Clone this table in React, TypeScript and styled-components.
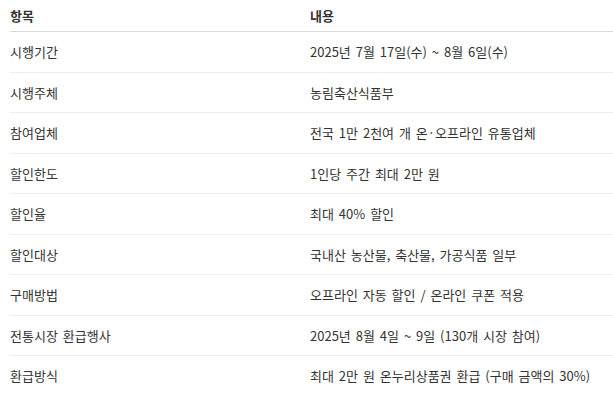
import React from 'react'
import styled, { createGlobalStyle } from 'styled-components'

const GlobalStyle = createGlobalStyle`
  body {
    margin: 0;
    background: #fff;
    font-family: "Noto Sans CJK KR", "Noto Sans", sans-serif;
  }
`

interface Row {
  label: string
  value: string
}

const rows: Row[] = [
  { label: '시행기간', value: '2025년 7월 17일(수) ~ 8월 6일(수)' },
  { label: '시행주체', value: '농림축산식품부' },
  { label: '참여업체', value: '전국 1만 2천여 개 온·오프라인 유통업체' },
  { label: '할인한도', value: '1인당 주간 최대 2만 원' },
  { label: '할인율', value: '최대 40% 할인' },
  { label: '할인대상', value: '국내산 농산물, 축산물, 가공식품 일부' },
  { label: '구매방법', value: '오프라인 자동 할인 / 온라인 쿠폰 적용' },
  { label: '전통시장 환급행사', value: '2025년 8월 4일 ~ 9일 (130개 시장 참여)' },
  { label: '환급방식', value: '최대 2만 원 온누리상품권 환급 (구매 금액의 30%)' },
]

const App = () => (
  <>
    <GlobalStyle />
    <Wrapper>
      <Table>
        <thead>
          <tr>
            <HeadCell>항목</HeadCell>
            <HeadCell>내용</HeadCell>
          </tr>
        </thead>
        <tbody>
          {rows.map((row) => (
            <BodyRow key={row.label}>
              <Cell>{row.label}</Cell>
              <Cell>{row.value}</Cell>
            </BodyRow>
          ))}
        </tbody>
      </Table>
    </Wrapper>
  </>
)

const Wrapper = styled.div`
  padding-left: 10px;
`

const Table = styled.table`
  width: 603px;
  border-collapse: collapse;
  table-layout: fixed;
  color: #333;
  font-size: 13px;
  word-spacing: 2px;
`

const HeadCell = styled.th`
  text-align: left;
  font-weight: 700;
  padding: 7px 0 6px;
  line-height: 18px;
  border-bottom: 1px solid #d9d9d9;

  &:first-child {
    width: 300px;
  }
`

const BodyRow = styled.tr`
  &:last-child td {
    border-bottom: none;
  }
`

const Cell = styled.td`
  padding: 11px 0 11px;
  line-height: 17.5px;
  border-bottom: 1px solid #eeeeee;
`

export default App
